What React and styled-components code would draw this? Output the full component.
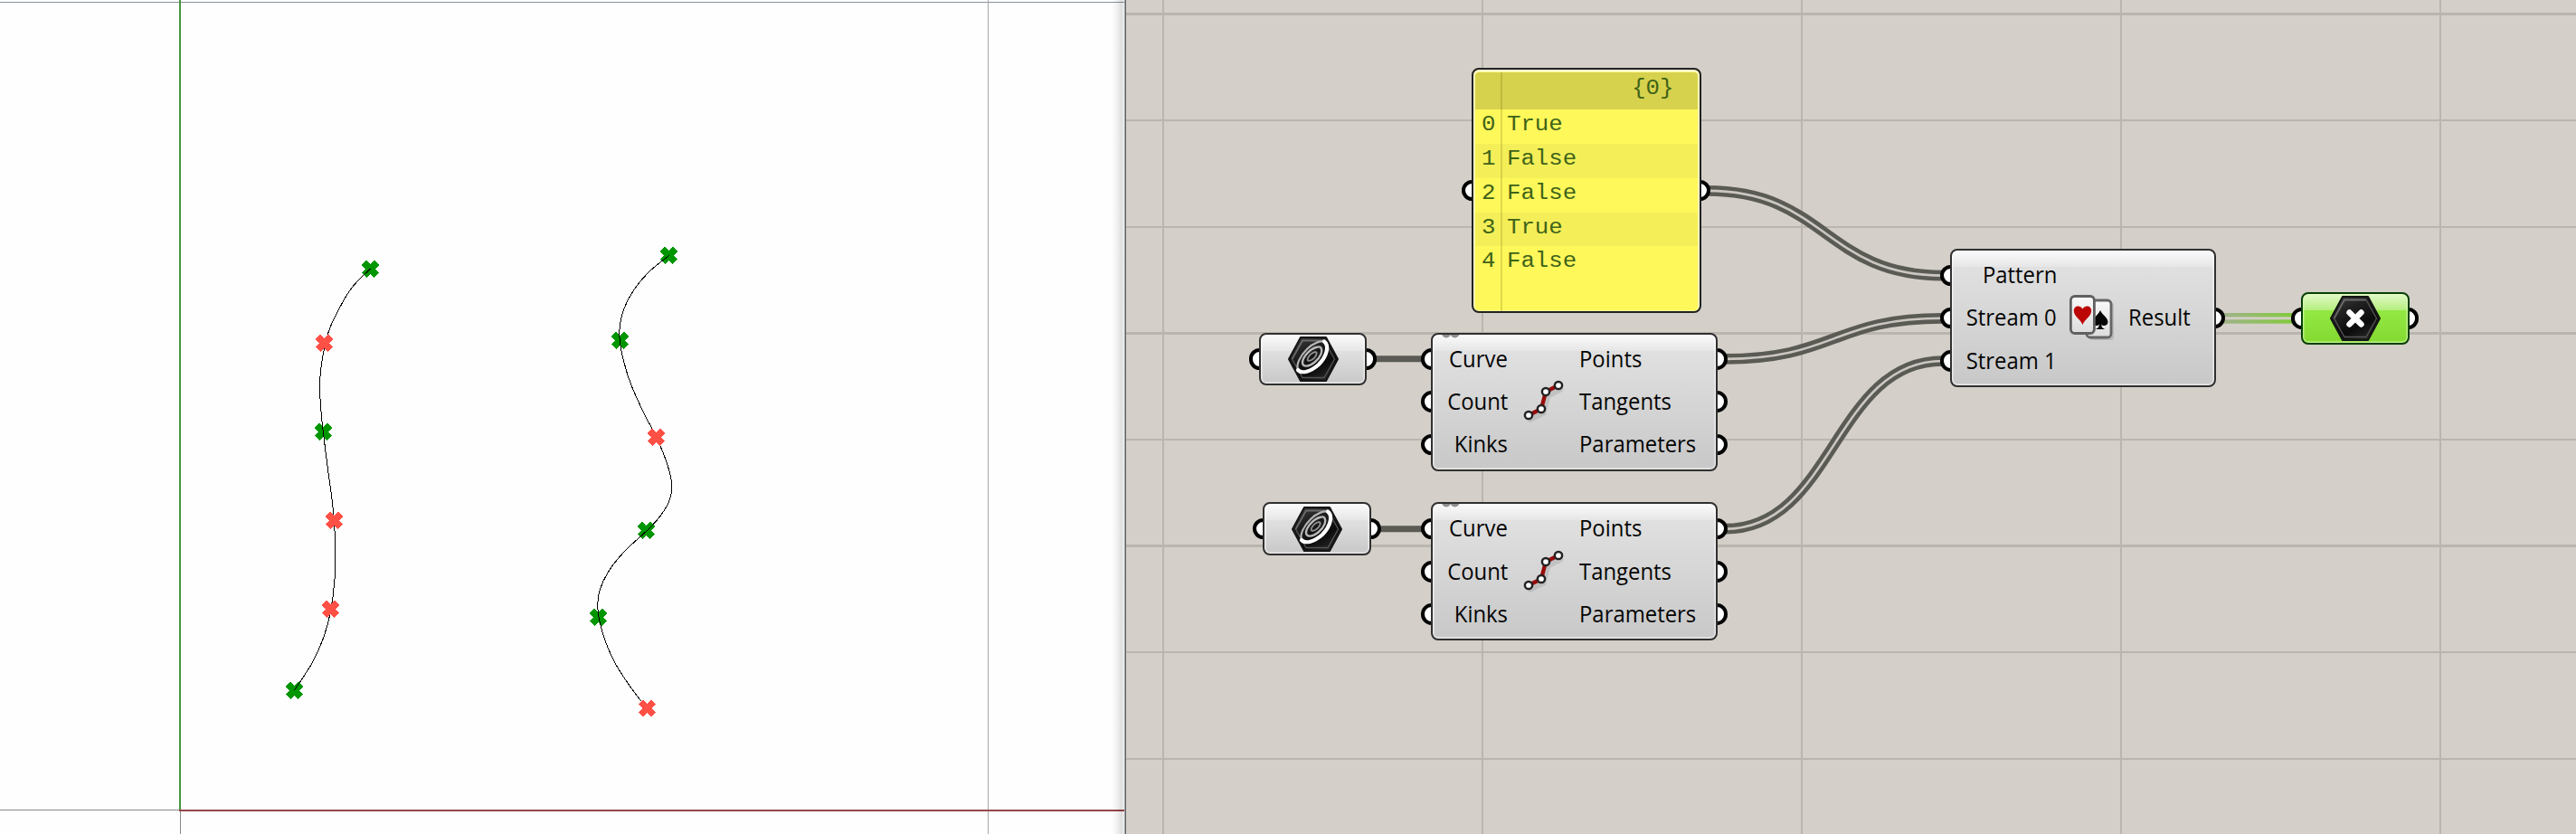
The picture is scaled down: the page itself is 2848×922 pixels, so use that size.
import React from "react";
import styled, { createGlobalStyle } from "styled-components";

const GlobalStyle = createGlobalStyle`
  body { margin: 0; background: #d4cfc8; overflow: hidden; }
  * { box-sizing: border-box; }
`;

const Screen = styled.main`
  display: flex;
  width: 2848px;
  height: 922px;
  overflow: hidden;
`;

const Viewport = styled.section`
  display: flex;
  flex: none;
  width: 1245px;
  height: 922px;
  background: #fefefe;
`;

const ViewportEdge = styled.div`
  flex: none;
  width: 16px;
  margin-left: -16px;
  border-right: 1px solid #5f6164;
  background: linear-gradient(
    to right,
    rgba(0, 0, 0, 0) 0,
    rgba(0, 0, 0, 0.05) 6px,
    rgba(0, 0, 0, 0.13) 11.5px,
    rgba(0, 0, 0, 0.06) 12px,
    rgba(0, 0, 0, 0.09) 14px,
    #a2a5a8 14px
  );
`;

const Drawing = styled.svg`
  display: block;
  flex: none;
`;

const Canvas = styled.section`
  position: relative;
  flex: none;
  width: 1603px;
  height: 922px;
  background: #d4cfc8;
  overflow: hidden;
`;

const Wires = styled.svg`
  display: block;
`;

/* Nodes sit freely on the canvas; the grips peek out on both sides. */
const Node = styled.article`
  position: absolute;
  left: ${(p) => p.$x - 1245 - 10.8}px;
  top: ${(p) => p.$y}px;
  width: ${(p) => p.$w + 21.6}px;
  height: ${(p) => p.$h}px;
  display: flex;
`;

const GripRail = styled.div`
  display: flex;
  flex: none;
  flex-direction: column;
  justify-content: center;
  gap: 23.8px;
  margin-left: ${(p) => (p.$right ? -12.6 : 0)}px;
  margin-right: ${(p) => (p.$right ? 0 : -12.6)}px;
`;

const Grip = styled.i`
  width: 23.4px;
  height: 23.4px;
  border: 4.6px solid #000;
  border-radius: 50%;
  background: #fff;
`;

const Body = styled.div`
  flex: 1;
  min-width: 0;
  z-index: 1;
  overflow: hidden;
  border: 2.4px solid ${(p) => (p.$green ? "#093f07" : "#303030")};
  border-radius: 8px;
  background: ${(p) =>
    p.$green
      ? "linear-gradient(#e2fac9 0, #b5ee7e 18px, #93e843 18px, #84d931 100%)"
      : "linear-gradient(#fbfbfb 0, #e6e6e6 18px, #e0e0e0 18px, #c8c8c8 100%)"};
  box-shadow: inset 0 0 1px 1.4px
    ${(p) => (p.$green ? "rgba(225,255,190,.65)" : "rgba(255,255,255,.65)")};
`;

const ParamBody = styled(Body)`
  display: flex;
  align-items: center;
  justify-content: center;
`;

const ComponentBody = styled(Body)`
  position: relative;
  display: grid;
  grid-template-columns: ${(p) => p.$columns};
  align-items: center;
  justify-items: center;
  padding: 2.5px 0 4px;
`;

const Ports = styled.div`
  display: flex;
  flex-direction: column;
  justify-self: ${(p) => p.$align};
  align-items: ${(p) => p.$align};
`;

const PortLabel = styled.span`
  height: 47.2px;
  font: 25px/46.4px "Open Sans", "Noto Sans", sans-serif;
  color: #050505;
  white-space: nowrap;
  transform: scaleX(0.955);
  transform-origin: ${(p) => (p.$align === "end" ? "right" : "left")};
`;

const Teeth = styled.svg`
  position: absolute;
  left: 9.6px;
  top: 0;
`;

const PanelBody = styled.div`
  display: flex;
  flex: 1;
  flex-direction: column;
  z-index: 1;
  overflow: hidden;
  padding: 3px 2px 0;
  border: 2.4px solid #222;
  border-radius: 8px;
  background: #fff85a;
  box-shadow: inset 0 1px 0 1.6px rgba(255, 255, 225, 0.9);
`;

const PanelRow = styled.div`
  display: grid;
  grid-template-columns: 30.9px 1fr;
  flex: ${(p) => (p.$filler ? "1" : "none")};
  height: ${(p) => (p.$header ? 41.3 : 37.7)}px;
  border-radius: ${(p) => (p.$header ? "4px 4px 0 0" : 0)};
  background: ${(p) =>
    p.$header ? "#d7d24d" : p.$alt ? "#f4ef58" : "transparent"};
`;

const IndexCell = styled.div`
  padding-left: 7px;
  border-right: 2.4px solid rgba(80, 80, 0, 0.18);
`;

const ValueCell = styled.div`
  display: flex;
  justify-content: ${(p) => (p.$end ? "flex-end" : "flex-start")};
  padding: 0 ${(p) => (p.$end ? 26 : 0)}px 0 5px;
`;

const PanelText = styled.span`
  display: block;
  font: 23px/${(p) => (p.$header ? 36 : 35)}px "Liberation Mono", monospace;
  color: #3e6318;
  white-space: pre;
  transform: scaleX(1.117);
  transform-origin: ${(p) => (p.$header ? "right" : "left")};
`;

const HexBase = ({ id }) => (
  <>
    <defs>
      <linearGradient id={id} x1="0" y1="0" x2="0.6" y2="1">
        <stop offset="0" stopColor="#444" />
        <stop offset="0.35" stopColor="#222" />
        <stop offset="0.75" stopColor="#0b0b0b" />
        <stop offset="1" stopColor="#222" />
      </linearGradient>
    </defs>
    <path
      d="M14 1H42L55 25L42 49H14L1 25Z"
      fill={`url(#${id})`}
      stroke="#151515"
      strokeWidth="2"
      strokeLinejoin="round"
    />
    <path
      d="M4.5 25L16 4.5H40"
      fill="none"
      stroke="#808080"
      strokeWidth="1.8"
      opacity=".75"
    />
    <path
      d="M40 4.5L51.5 25L40 45.5H16L4.5 25"
      fill="none"
      stroke="#555"
      strokeWidth="1.3"
    />
  </>
);

const CurveIcon = ({ id }) => (
  <svg width="56" height="50" viewBox="0 0 56 50">
    <HexBase id={id} />
    <path
      d="M11 36C9 31 13 22 21 14C28 7 37 4 40 6"
      fill="none"
      stroke="#b4b4b4"
      strokeWidth="2.2"
    />
    <path
      d="M36 12C39 16 36 23 30 28C23 34 16 34 16 29C16 23 24 14 31 12C34 11 35 11 36 12"
      fill="none"
      stroke="#b9b9b9"
      strokeWidth="2.4"
    />
    <path
      d="M31 17C33 19 30 24 26 26C22 28 21 26 22 24C23 21 27 17 31 17"
      fill="none"
      stroke="#8f8f8f"
      strokeWidth="1.8"
    />
    <path
      d="M40 5.500C46 10 43 22 34 31C25 39 15 41.500 11 37"
      fill="none"
      stroke="#fff"
      strokeWidth="4.2"
      strokeLinecap="round"
    />
  </svg>
);

const PointIcon = () => (
  <svg width="56" height="50" viewBox="0 0 56 50">
    <HexBase id="hexPoint" />
    <path
      d="M21.5 18.5L34.5 31.5M34.5 18.5L21.5 31.5"
      stroke="#fff"
      strokeWidth="6.4"
      strokeLinecap="round"
    />
  </svg>
);

const DIVIDE_NODES = [
  [7, 41],
  [21, 34],
  [26, 15],
  [40, 8],
];

const DivideIcon = () => (
  <svg width="48" height="50" viewBox="0 0 48 50">
    <path
      d="M9 45L23 38L28 19L42 12"
      fill="none"
      stroke="#000"
      opacity=".1"
      strokeWidth="7"
      strokeLinecap="round"
    />
    <path
      d="M7 41L21 34L26 15L40 8"
      fill="none"
      stroke="#980b0b"
      strokeWidth="4.4"
    />
    {DIVIDE_NODES.map(([x, y]) => (
      <circle
        key={x}
        cx={x}
        cy={y}
        r="4.1"
        fill="#fff"
        stroke="#222"
        strokeWidth="2.5"
      />
    ))}
  </svg>
);

const WeaveIcon = () => (
  <svg width="50" height="50" viewBox="0 0 50 50">
    <defs>
      <linearGradient id="card" x1="0" y1="0" x2="0" y2="1">
        <stop offset="0" stopColor="#fafafa" />
        <stop offset="1" stopColor="#dcdcdc" />
      </linearGradient>
    </defs>
    <rect x="22" y="8" width="27" height="42" rx="4" fill="#000" opacity=".12" />
    <rect
      x="19"
      y="6"
      width="27"
      height="41"
      rx="4"
      fill="url(#card)"
      stroke="#666"
      strokeWidth="2.8"
    />
    <path
      d="M34 17C36 22 42.5 25 42.5 30C42.5 34 37.5 35.5 35 32.5L36 36L39 38H29L32 36L33 32.5C30 35.5 26 34 26 30C26 25 32 22 34 17Z"
      fill="#050505"
    />
    <rect
      x="1.4"
      y="1.5"
      width="26"
      height="41"
      rx="4.5"
      fill="url(#card)"
      stroke="#606060"
      strokeWidth="2.8"
    />
    <path
      d="M14.500 33C12 26.500 4.800 24 4.800 17.500C4.800 11.500 12 11 14.500 15.500C17 11 24.200 11.500 24.200 17.500C24.200 24 17 26.500 14.500 33Z"
      fill="#bc0505"
    />
  </svg>
);

const Grips = ({ count, right }) => (
  <GripRail $right={right}>
    {Array.from({ length: count }, (_, i) => (
      <Grip key={i} />
    ))}
  </GripRail>
);

const Labels = ({ align, items }) => (
  <Ports $align={align}>
    {items.map((t) => (
      <PortLabel key={t} $align={align}>
        {t}
      </PortLabel>
    ))}
  </Ports>
);

const Param = ({ x, y, green, children }) => (
  <Node $x={x} $y={y} $w={119.6} $h={58.8}>
    <Grips count={1} />
    <ParamBody $green={green}>{children}</ParamBody>
    <Grips count={1} right />
  </Node>
);

const DivideCurve = ({ y }) => (
  <Node $x={1582.1} $y={y} $w={316.8} $h={153}>
    <Grips count={3} />
    <ComponentBody $columns="83px 79px 1fr">
      <Labels align="end" items={["Curve", "Count", "Kinks"]} />
      <DivideIcon />
      <Labels align="start" items={["Points", "Tangents", "Parameters"]} />
      <Teeth width="20" height="4">
        <circle cx="5" cy="-1.5" r="5" fill="#8e8e8e" />
        <circle cx="14.5" cy="-1.5" r="5" fill="#8e8e8e" />
      </Teeth>
    </ComponentBody>
    <Grips count={3} right />
  </Node>
);

const Weave = () => (
  <Node $x={2156} $y={275.3} $w={293.6} $h={153}>
    <Grips count={3} />
    <ComponentBody $columns="116px 79px 1fr">
      <Labels align="end" items={["Pattern", "Stream 0", "Stream 1"]} />
      <WeaveIcon />
      <Labels align="start" items={["Result"]} />
    </ComponentBody>
    <Grips count={1} right />
  </Node>
);

const VALUES = ["True", "False", "False", "True", "False"];

const Panel = () => (
  <Node $x={1626.6} $y={75.2} $w={254} $h={270.8}>
    <Grips count={1} />
    <PanelBody>
      <PanelRow $header>
        <IndexCell />
        <ValueCell $end>
          <PanelText $header>{"{0}"}</PanelText>
        </ValueCell>
      </PanelRow>
      {VALUES.map((v, i) => (
        <PanelRow key={i} $alt={i % 2 === 1}>
          <IndexCell>
            <PanelText>{i}</PanelText>
          </IndexCell>
          <ValueCell>
            <PanelText>{v}</PanelText>
          </ValueCell>
        </PanelRow>
      ))}
      <PanelRow $filler>
        <IndexCell />
      </PanelRow>
    </PanelBody>
    <Grips count={1} right />
  </Node>
);

/* Catmull-Rom spline through the points, as cubic segments. */
const smooth = (pts) => {
  let d = `M${pts[0]}`;
  for (let i = 0; i < pts.length - 1; i++) {
    const a = pts[i - 1] || pts[i];
    const b = pts[i];
    const c = pts[i + 1];
    const e = pts[i + 2] || c;
    d += `C${b[0] + (c[0] - a[0]) / 6},${b[1] + (c[1] - a[1]) / 6} ${
      c[0] - (e[0] - b[0]) / 6
    },${c[1] - (e[1] - b[1]) / 6} ${c}`;
  }
  return d;
};

const CURVES = [
  smooth([
    [409.5, 297], [389, 318], [374, 343], [363.5, 366], [358, 388],
    [354.5, 410], [353.6, 431], [355, 455], [357.6, 480], [362, 515],
    [366.5, 548], [369.3, 575], [370.6, 605], [370, 640], [365.5, 676],
    [358, 704], [345, 733], [325.5, 763],
  ]),
  smooth([
    [739.7, 282.5], [717, 301], [700.5, 321], [690, 341], [685.5, 359],
    [685.3, 377], [690, 401], [698, 426], [712, 457], [726, 484],
    [738, 514], [743, 538], [738.5, 557], [728, 573], [714.8, 587],
    [690, 610], [672, 633], [663, 653], [660.8, 670], [662.5, 685],
    [669, 708], [680, 733], [696, 758], [715, 783],
  ]),
];

const GREEN_MARKS = [
  [409.5, 297.5], [357.5, 477.5], [325.5, 763.5], [739.5, 282.5],
  [685.5, 376.5], [714.5, 586.5], [661.5, 682.5],
];
const RED_MARKS = [
  [358.5, 379.5], [369.5, 575.5], [365.5, 673.5], [725.5, 483.5], [715.5, 783],
];

const Marks = ({ points, color }) => (
  <path
    d={points
      .map(
        ([x, y]) =>
          `M${x - 7} ${y - 7}L${x + 7} ${y + 7}M${x + 7} ${y - 7}L${x - 7} ${y + 7}`
      )
      .join("")}
    stroke={color}
    strokeWidth="7.2"
    fill="none"
  />
);

const GRID_ROWS = [
  [14, 3], [132, 2], [250, 2], [367, 3], [485, 2], [602, 3], [720, 2], [838, 2],
];
const GRID_COLUMNS = [40, 393, 746, 1099, 1452];

const link = (x1, y1, x2, y2) => {
  const m = (x1 + x2) / 2;
  return `M${x1} ${y1}C${m} ${y1} ${m} ${y2} ${x2} ${y2}`;
};

const LIST_LINKS = [
  link(643, 210.9, 903, 304.6),
  link(662, 396.9, 903, 351.8),
  link(662, 584.7, 903, 399),
];

export default function App() {
  return (
    <Screen>
      <GlobalStyle />
      <Viewport>
        <Drawing width="1245" height="922">
          <g shapeRendering="crispEdges">
            <rect x="0" y="2" width="1243" height="1" fill="#87909a" />
            <rect x="1092" y="0" width="1" height="922" fill="#a4a7ab" />
            <rect x="0" y="895" width="198" height="1" fill="#85888c" />
            <rect x="199" y="897" width="1" height="25" fill="#85888c" />
            <rect x="198" y="0" width="2" height="895" fill="#43963f" />
            <rect x="198" y="895" width="1045" height="2" fill="#964646" />
            <Marks points={GREEN_MARKS} color="#009600" />
            {CURVES.map((d) => (
              <path key={d} d={d} fill="none" stroke="#000" strokeWidth="1" />
            ))}
            <Marks points={RED_MARKS} color="#ff5046" />
          </g>
        </Drawing>
        <ViewportEdge />
      </Viewport>
      <Canvas>
        <Wires width="1603" height="922">
          <defs>
            <linearGradient
              id="selected"
              gradientUnits="userSpaceOnUse"
              x1="1215"
              y1="0"
              x2="1290"
              y2="0"
            >
              <stop offset="0" stopColor="#9fb387" />
              <stop offset="1" stopColor="#82cb3c" />
            </linearGradient>
          </defs>
          <g fill="#bab6af" shapeRendering="crispEdges">
            {GRID_ROWS.map(([y, h]) => (
              <rect key={y} x="0" y={y} width="1603" height={h} />
            ))}
            {GRID_COLUMNS.map((x) => (
              <rect key={x} x={x} y="0" width="2" height="922" />
            ))}
          </g>
          <g fill="none">
            <path
              d="M275 396.7H328M280 584.7H328"
              stroke="#5b5b55"
              strokeWidth="7"
            />
            {LIST_LINKS.map((d) => (
              <React.Fragment key={d}>
                <path d={d} stroke="#5b5b55" strokeWidth="11.7" />
                <path d={d} stroke="#cbc7c0" strokeWidth="2.6" />
              </React.Fragment>
            ))}
            <rect x="1212" y="346" width="84" height="4.4" fill="url(#selected)" />
            <rect x="1212" y="353.3" width="84" height="4.4" fill="url(#selected)" />
          </g>
        </Wires>
        <Panel />
        <Param x={1391.8} y={367.6}>
          <CurveIcon id="hexCurveA" />
        </Param>
        <Param x={1396.2} y={555.4}>
          <CurveIcon id="hexCurveB" />
        </Param>
        <DivideCurve y={367.6} />
        <DivideCurve y={555.4} />
        <Weave />
        <Param x={2544.1} y={322.5} green>
          <PointIcon />
        </Param>
      </Canvas>
    </Screen>
  );
}
